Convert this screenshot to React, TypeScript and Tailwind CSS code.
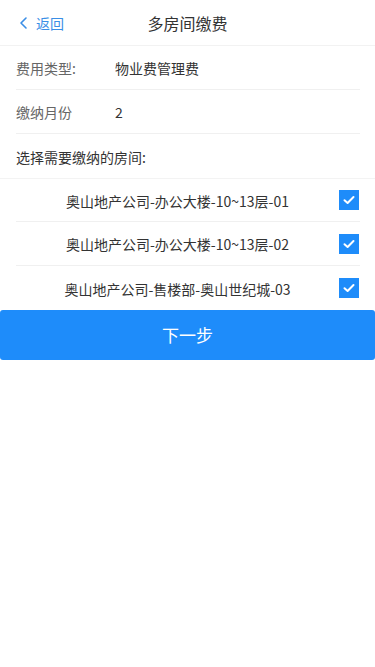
import React from "react";

const rooms = [
  "奥山地产公司-办公大楼-10~13层-01",
  "奥山地产公司-办公大楼-10~13层-02",
  "奥山地产公司-售楼部-奥山世纪城-03",
];

function Check() {
  return (
    <div className="w-5 h-5 bg-[#1e8cfa] flex items-center justify-center">
      <svg width="14" height="14" viewBox="0 0 14 14" fill="none">
        <path d="M2.5 7.2 L5.6 10 L11.5 4" stroke="white" strokeWidth="2" strokeLinecap="round" strokeLinejoin="round" />
      </svg>
    </div>
  );
}

export default function App() {
  return (
    <div
      className="w-[375px] min-h-[667px] bg-white text-[14px] text-[#333]"
      style={{ fontFamily: '"Noto Sans CJK SC", "Liberation Sans", sans-serif' }}
    >
      <div className="h-[46px] relative flex items-center justify-center border-b border-[#f2f2f2]">
        <div className="absolute left-[18px] top-0 h-full flex items-center text-[#3a8ee6] text-[14px] pt-[1px]">
          <svg width="12" height="14" viewBox="0 0 12 14" fill="none" className="mr-[6px]">
            <path d="M8 2 L3 7 L8 12" stroke="#3a8ee6" strokeWidth="1.6" strokeLinecap="round" strokeLinejoin="round" />
          </svg>
          返回
        </div>
        <div className="text-[16px] text-[#333] pt-[1px]">多房间缴费</div>
      </div>
      <div className="pl-4 pr-[15px]">
        <div className="h-[44px] flex items-center border-b border-[#f0f0f0] pt-[2px]">
          <span className="w-[99px] text-[#666]">费用类型:</span>
          <span>物业费管理费</span>
        </div>
        <div className="h-[44px] flex items-center border-b border-[#f0f0f0] pt-[2px]">
          <span className="w-[99px] text-[#666]">缴纳月份</span>
          <span>2</span>
        </div>
        <div className="h-[44px] flex items-center pt-[2px]">
          <span>选择需要缴纳的房间:</span>
        </div>
      </div>
      <div className="h-[1px] bg-[#f3f3f3]" />
      <div className="pl-4 pr-[15px]">
        {rooms.map((r, i) => (
          <div
            key={r}
            className={
              i === 0
                ? "h-[43px] flex items-center border-b border-[#f0f0f0]"
                : i === 1
                ? "h-[44px] flex items-center border-b border-[#f0f0f0]"
                : "h-[44px] flex items-center"
            }
          >
            <div className="flex-1 text-center pt-[2px]">{r}</div>
            <div className="w-[20px] mr-[1px]">
              <Check />
            </div>
          </div>
        ))}
      </div>
      <div className="h-[50px] rounded-[3px] bg-[#1e8cfa] flex items-center justify-center text-white text-[17px]">
        下一步
      </div>
    </div>
  );
}
